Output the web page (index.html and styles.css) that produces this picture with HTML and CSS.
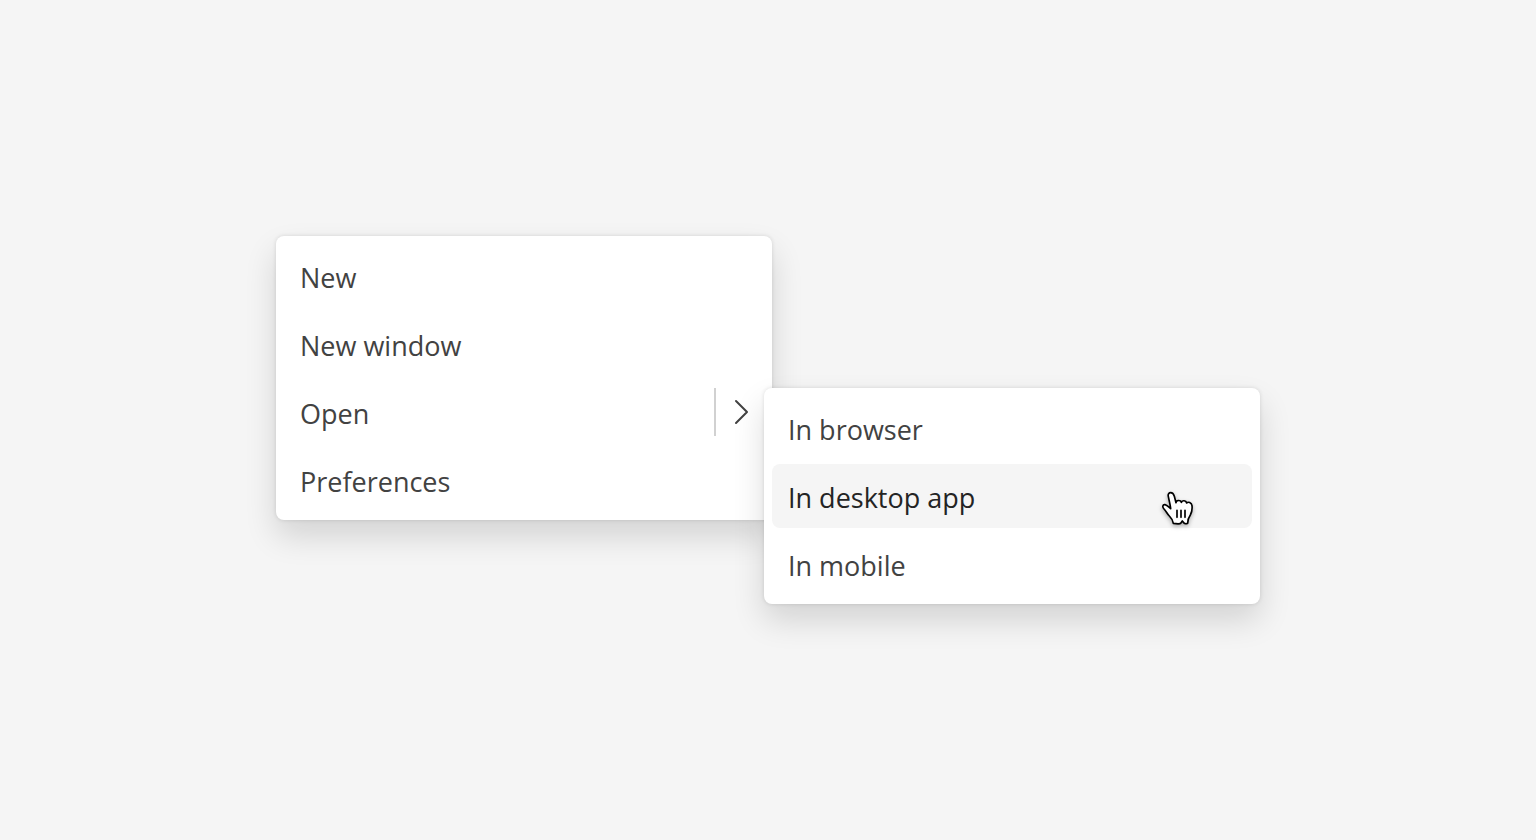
FILE: index.html
```html
<!DOCTYPE html>
<html lang="en">
<head>
<meta charset="utf-8">
<meta name="viewport" content="width=device-width, initial-scale=1">
<title>Menu</title>
<link rel="stylesheet" href="styles.css">
</head>
<body>
<main class="stage">
  <div class="menu" role="menu" aria-label="File">
    <button class="item" type="button" role="menuitem">New</button>
    <button class="item" type="button" role="menuitem">New window</button>
    <div class="split">
      <button class="item" type="button" role="menuitem">Open</button>
      <button class="expand" type="button" role="menuitem" aria-label="Open options" aria-haspopup="menu" aria-expanded="true">
        <svg class="chevron" viewBox="0 0 16 28" aria-hidden="true"><path d="M2 3 L13 14 L2 25"/></svg>
      </button>
    </div>
    <button class="item" type="button" role="menuitem">Preferences</button>
  </div>
  <div class="menu submenu" role="menu" aria-label="Open options">
    <button class="item" type="button" role="menuitem">In browser</button>
    <button class="item hovered" type="button" role="menuitem">In desktop app
      <svg class="pointer" viewBox="30 30 108 120" aria-hidden="true"><path d="M70 130 C69 121 64 114 58 108 C51 101 49 94 42 87 C36 81 38 73 45 74 C51 75 56 81 62 86 C61 75 57 60 55 50 C53 42 57 38 62 38 C68 38 71 42 73 49 L78 68 C78 60 92 59 94 67 C97 60 108 61 110 69 C114 64 125 68 126 77 C127 86 126 96 121 105 C116 112 113 119 113 130 C109 132 105 131 103 130 L97 123 C95 126 93 130 90 131 C84 132 76 131 70 130 Z"/><path d="M81 91 V112 M93 91 V112 M105 91 V112"/></svg>
    </button>
    <button class="item" type="button" role="menuitem">In mobile</button>
  </div>
</main>
</body>
</html>
```
FILE: styles.css
```css
* {
  box-sizing: border-box;
}

body {
  margin: 0;
  background: #f5f5f5;
  color: #424242;
  font-family: "Segoe UI", "Open Sans", "Noto Sans", sans-serif;
  font-size: 27px;
  line-height: 40px;
}

.stage {
  display: grid;
  grid-template-columns: auto auto;
  align-content: center;
  align-items: start;
  justify-content: center;
  min-height: 100vh;
}

.menu {
  display: flex;
  flex-direction: column;
  gap: 4px;
  width: 496px;
  padding: 8px;
  border-radius: 8px;
  background: #fff;
  box-shadow: 0 0 4px rgba(0, 0, 0, 0.12), 0 16px 32px rgba(0, 0, 0, 0.14);
}

.submenu {
  margin: 152px 0 0 -8px;
}

.item,
.expand {
  border: 0;
  border-radius: 8px;
  background: transparent;
  color: inherit;
  font: inherit;
}

.item {
  position: relative;
  flex: 1;
  padding: 14px 16px 10px;
  text-align: left;
}

.hovered {
  background: #f5f5f5;
  color: #242424;
}

.split {
  display: flex;
  align-items: center;
}

.expand {
  display: flex;
  align-items: center;
  height: 48px;
  padding: 0 14px 0 18px;
  border-left: 2px solid #d1d1d1;
  border-radius: 0;
}

.chevron {
  width: 16px;
  height: 28px;
  fill: none;
  stroke: #424242;
  stroke-width: 2;
  stroke-linecap: round;
  stroke-linejoin: round;
}

.pointer {
  position: absolute;
  top: 26px;
  right: 56px;
  width: 36px;
  height: 40px;
  overflow: visible;
  fill: #fff;
  stroke: #000;
  stroke-width: 5;
  stroke-linecap: round;
  stroke-linejoin: round;
  filter: drop-shadow(0 2px 2px rgba(0, 0, 0, 0.3));
}
```
